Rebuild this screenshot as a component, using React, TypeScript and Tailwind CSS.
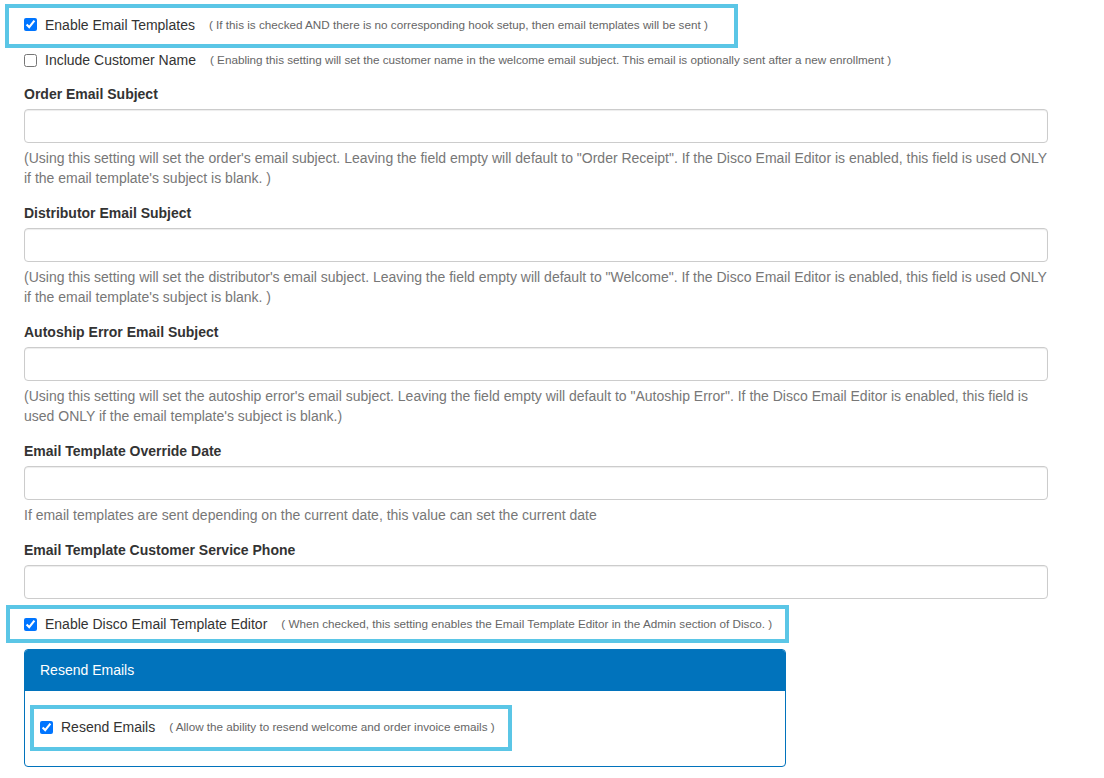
const fields = [
  {
    label: "Order Email Subject",
    help: "(Using this setting will set the order's email subject. Leaving the field empty will default to \"Order Receipt\". If the Disco Email Editor is enabled, this field is used ONLY if the email template's subject is blank. )",
  },
  {
    label: "Distributor Email Subject",
    help: "(Using this setting will set the distributor's email subject. Leaving the field empty will default to \"Welcome\". If the Disco Email Editor is enabled, this field is used ONLY if the email template's subject is blank. )",
  },
  {
    label: "Autoship Error Email Subject",
    help: "(Using this setting will set the autoship error's email subject. Leaving the field empty will default to \"Autoship Error\". If the Disco Email Editor is enabled, this field is used ONLY if the email template's subject is blank.)",
  },
  {
    label: "Email Template Override Date",
    help: "If email templates are sent depending on the current date, this value can set the current date",
  },
  { label: "Email Template Customer Service Phone", help: "" },
];

function Check({ label, hint, checked }: { label: string; hint: string; checked?: boolean }) {
  return (
    <label className="flex items-center whitespace-nowrap">
      <input type="checkbox" defaultChecked={checked} className="w-[13px] h-[13px] m-0 shrink-0" />
      <span className="ml-[8px] text-[14px] leading-[20px] text-[#333]">{label}</span>
      <span className="ml-[14px] text-[11.7px] leading-[20px] text-[#666]">{hint}</span>
    </label>
  );
}

export default function App() {
  return (
    <div
      className="min-h-screen bg-white px-[24px] pt-[4px] pr-[56px]"
      style={{ fontFamily: "'Liberation Sans', Arial, sans-serif" }}
    >
      {/* highlighted */}
      <div className="-ml-[19px] w-[733px] h-[44px] border-4 border-[#5bc6e6] pl-[15px] pb-[3px] flex items-center">
        <Check
          checked
          label="Enable Email Templates"
          hint="( If this is checked AND there is no corresponding hook setup, then email templates will be sent )"
        />
      </div>

      <div className="h-[24px] flex items-center">
        <Check
          label="Include Customer Name"
          hint="( Enabling this setting will set the customer name in the welcome email subject. This email is optionally sent after a new enrollment )"
        />
      </div>

      <div className="mt-[12px]">
        {fields.map((f) => (
          <div key={f.label} className={f.help ? "mb-[15px]" : ""}>
            <div className="text-[14px] leading-[20px] font-bold text-[#333] mb-[5px]">{f.label}</div>
            <input
              type="text"
              className="block w-full h-[34px] border border-[#ccc] rounded-[4px] px-3 text-[14px] shadow-[inset_0_1px_1px_rgba(0,0,0,0.075)] outline-none"
            />
            {f.help && (
              <p className="mt-[5px] text-[14px] leading-[20px] text-[#777]">{f.help}</p>
            )}
          </div>
        ))}
      </div>

      <div className="mt-[6px] -ml-[18px] w-[783px] h-[38px] border-4 border-[#5bc6e6] pl-[14px] flex items-center">
        <Check
          checked
          label="Enable Disco Email Template Editor"
          hint="( When checked, this setting enables the Email Template Editor in the Admin section of Disco. )"
        />
      </div>

      <div className="mt-[6px] w-[762px] border border-[#0173bc] rounded-[4px] overflow-hidden">
        <div className="h-[41px] bg-[#0173bc] pl-[15px] flex items-center text-[14px] text-white">
          Resend Emails
        </div>
        <div className="pt-[14px] pb-[15px] pl-[5px]">
          <div className="w-[482px] h-[46px] border-4 border-[#5bc6e6] pl-[6px] pb-[2px] flex items-center">
            <Check
              checked
              label="Resend Emails"
              hint="( Allow the ability to resend welcome and order invoice emails )"
            />
          </div>
        </div>
      </div>
    </div>
  );
}
